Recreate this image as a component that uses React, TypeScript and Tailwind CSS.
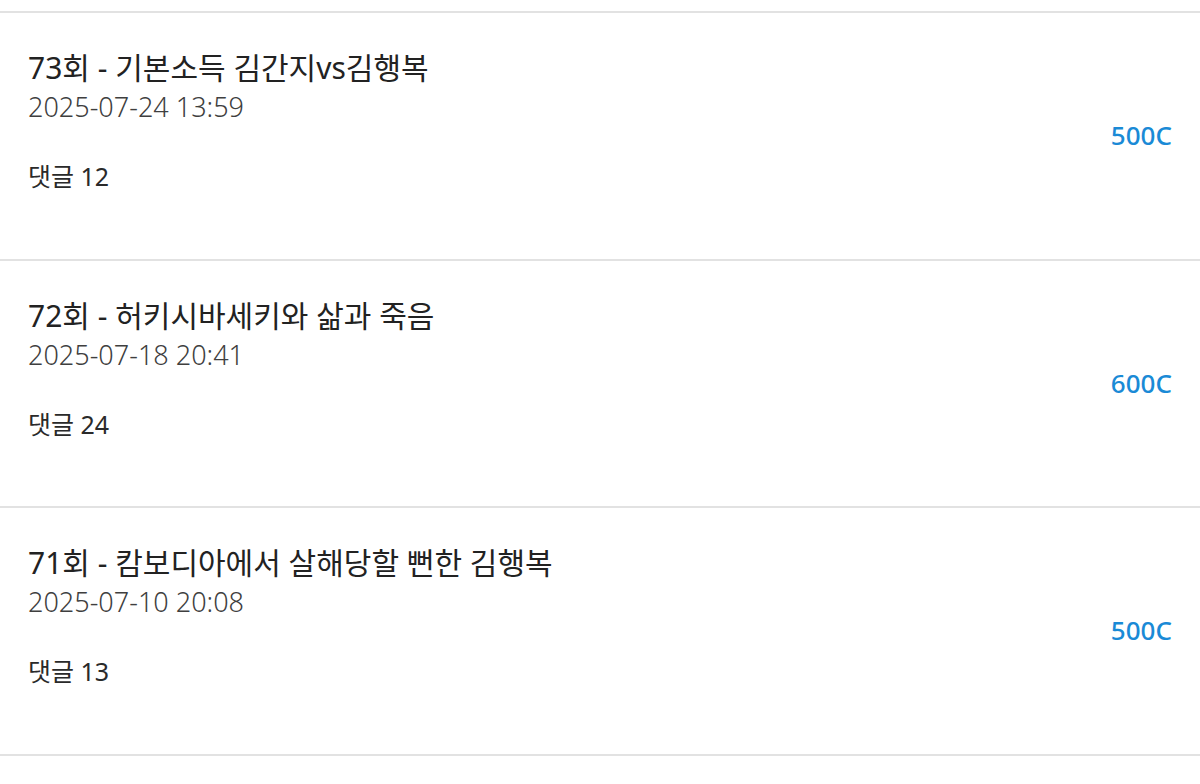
import React from 'react';

type Episode = {
  id: number;
  title: string;
  date: string;
  comments: number;
  price: string;
};

const episodes: Episode[] = [
  { id: 73, title: '73회 - 기본소득 김간지vs김행복', date: '2025-07-24 13:59', comments: 12, price: '500C' },
  { id: 72, title: '72회 - 허키시바세키와 삶과 죽음', date: '2025-07-18 20:41', comments: 24, price: '600C' },
  { id: 71, title: '71회 - 캄보디아에서 살해당할 뻔한 김행복', date: '2025-07-10 20:08', comments: 13, price: '500C' },
];

function EpisodeRow({ episode }: { episode: Episode }) {
  return (
    <div className="flex h-[247.5px] items-center justify-between border-b-2 border-[#e2e2e2] pl-7 pr-7">
      <div className="flex h-full flex-col pt-[35px]">
        <p className="text-[30px] leading-[40px] text-[#222]">{episode.title}</p>
        <p className="mt-[2px] text-[27px] font-light leading-[34px] text-[#3f3f3f]">{episode.date}</p>
        <p className="mt-[35px] text-[25px] leading-[34px] text-[#2a2a2a]">댓글 {episode.comments}</p>
      </div>
      <span className="text-[26px] font-medium text-[#1a8ad6]">{episode.price}</span>
    </div>
  );
}

export default function App() {
  return (
    <div className="min-h-[784px] w-[1200px] bg-white font-['Noto_Sans','Noto_Sans_CJK_KR',sans-serif]">
      <div className="h-[13px] border-b-2 border-[#e2e2e2]" />
      {episodes.map((episode) => (
        <EpisodeRow key={episode.id} episode={episode} />
      ))}
    </div>
  );
}
